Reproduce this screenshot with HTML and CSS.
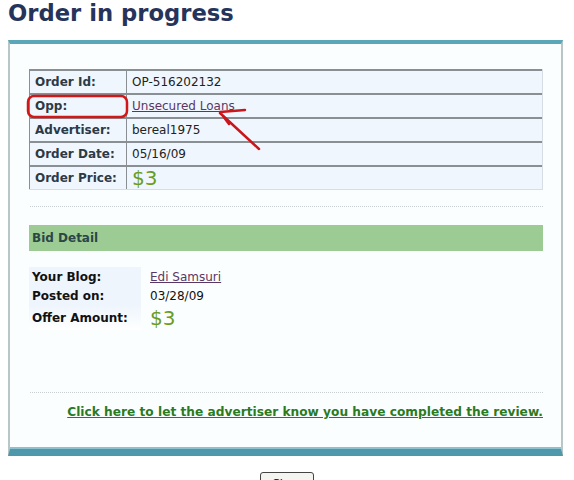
FILE: index.html
```html
<!DOCTYPE html>
<html lang="en">
<head>
    <meta charset="UTF-8">
    <title>Order in progress</title>
    <link rel="stylesheet" href="styles.css">
</head>
<body>

<h1 class="title">Order in progress</h1>

<div class="panel">
    <table class="order-table">
        <tr>
            <td class="label">Order Id:</td>
            <td class="value">OP-516202132</td>
        </tr>
        <tr>
            <td class="label">Opp:</td>
            <td class="value"><a href="#" class="visited">Unsecured Loans</a></td>
        </tr>
        <tr>
            <td class="label">Advertiser:</td>
            <td class="value">bereal1975</td>
        </tr>
        <tr>
            <td class="label">Order Date:</td>
            <td class="value">05/16/09</td>
        </tr>
        <tr>
            <td class="label">Order Price:</td>
            <td class="value"><span class="price">$3</span></td>
        </tr>
    </table>

    <div class="divider"></div>

    <div class="section-head">Bid Detail</div>

    <table class="bid-table">
        <tr>
            <td class="label">Your Blog:</td>
            <td class="value"><a href="#" class="visited">Edi Samsuri</a></td>
        </tr>
        <tr>
            <td class="label">Posted on:</td>
            <td class="value">03/28/09</td>
        </tr>
        <tr>
            <td class="label">Offer Amount:</td>
            <td class="value"><span class="price">$3</span></td>
        </tr>
    </table>

    <div class="divider bottom"></div>

    <p class="review"><a href="#">Click here to let the advertiser know you have completed the review.</a></p>
</div>

<div class="actions">
    <button class="close-btn">Close</button>
</div>

<!-- red marker drawn over the screenshot -->
<svg class="annotation" width="574" height="480" viewBox="0 0 574 480">
    <rect x="28" y="96" width="99" height="21" rx="6" ry="6" fill="none" stroke="#d01818" stroke-width="2.5"/>
    <path d="M259 149 L220 113 M245 110 L220 112 L229 124" fill="none" stroke="#c8161b" stroke-width="2.5" stroke-linecap="round" stroke-linejoin="round"/>
</svg>

</body>
</html>
```

FILE: styles.css
```css
body {
    margin: 0;
    font-family: "DejaVu Sans", Verdana, sans-serif;
    font-size: 12px;
    color: #2c3a48;
    background-color: #ffffff;
    position: relative;
}

.title {
    margin: 0 0 0 8px;
    height: 40px;
    font-size: 22.7px;
    line-height: 26px;
    color: #26345b;
}

.panel {
    margin: 0 11px 0 8px;
    padding: 25px 18px 30px 19px;
    background-color: #fbfefe;
    border-left: 2px solid #b9c6c8;
    border-right: 2px solid #b9c6c8;
    border-top: 4px solid #5ba6b8;
    border-bottom: 7px solid #4f97ab;
    box-shadow: inset 0 -2px 0 #8cc2cf;
}

.order-table,
.bid-table {
    width: 100%;
    border-collapse: separate;
    border-spacing: 0;
}

.order-table {
    border-right: 1px solid #d6dde4;
    border-bottom: 1px solid #d6dde4;
}

.order-table td {
    height: 22px;
    padding: 0 5px;
    background-color: #f0f6fd;
    border-top: 2px solid #8a8f94;
    border-left: 1px solid #8a8f94;
}

.order-table .label {
    width: 86px;
    font-weight: bold;
}

.order-table .value {
    color: #222;
}

.price {
    font-size: 20px;
    color: #6b9c1c;
    line-height: 20px;
}

.visited {
    color: #5a3766;
}

.divider {
    margin: 16px 0 18px 1px;
    border-top: 1px dotted #c9cfd2;
}

.section-head {
    height: 26px;
    line-height: 26px;
    padding-left: 3px;
    background-color: #9ccc94;
    font-weight: bold;
    color: #2a4646;
}

.bid-table {
    margin-top: 16px;
    width: auto;
}

.bid-table td {
    height: 19px;
    padding: 0 3px;
    color: #111;
}

.bid-table .label {
    width: 106px;
    font-weight: bold;
    background-color: #eef5fc;
}

.bid-table .value {
    padding-left: 9px;
}

.bid-table tr:last-child td {
    height: 25px;
}

.bid-table tr:last-child .label {
    background: linear-gradient(#eef5fc, #ffffff);
}

.divider.bottom {
    margin: 62px 0 12px 1px;
}

.review {
    margin: 0;
    text-align: right;
    font-weight: bold;
    font-size: 12.2px;
}

.review a {
    color: #2b7a1e;
}

.actions {
    padding-top: 16px;
    text-align: center;
}

.close-btn {
    width: 54px;
    height: 22px;
    font-family: "DejaVu Sans", sans-serif;
    font-size: 11px;
    background-color: #f4f4f0;
    border: 1px solid #444;
    border-radius: 3px;
}

.annotation {
    position: absolute;
    left: 0;
    top: 0;
    pointer-events: none;
}
```
